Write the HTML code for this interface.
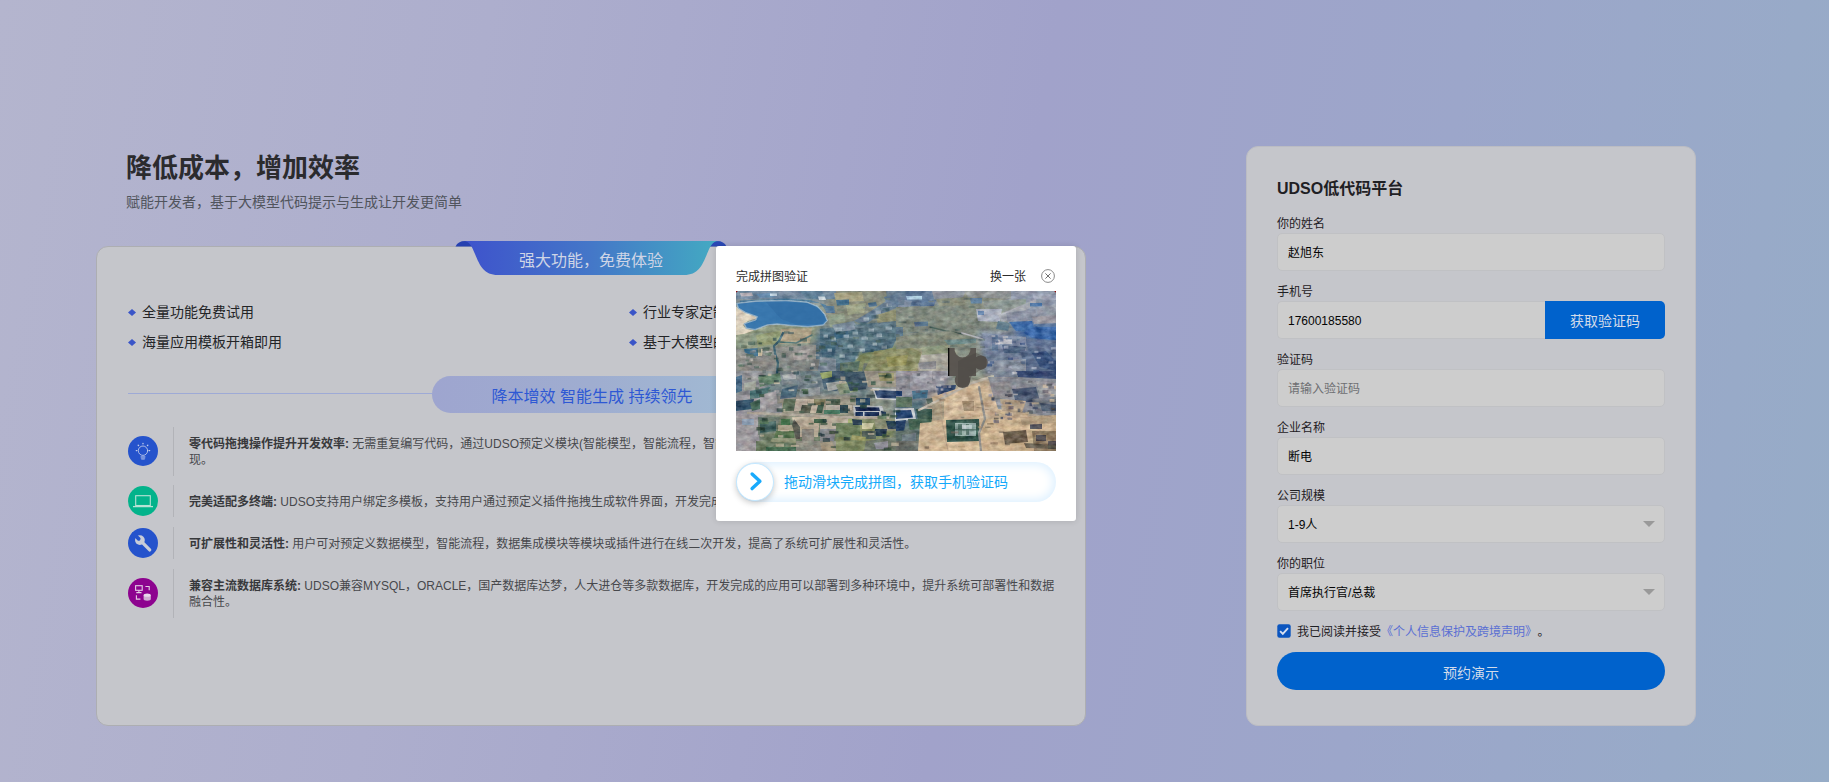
<!DOCTYPE html>
<html lang="zh-CN">
<head>
<meta charset="utf-8">
<title>UDSO低代码平台</title>
<style>
*{box-sizing:border-box;margin:0;padding:0}
html,body{width:1829px;height:782px;overflow:hidden}
body{
  position:relative;
  font-family:"Liberation Sans","Noto Sans CJK SC",sans-serif;
  background:linear-gradient(100deg,#b4b5ce 0%,#adaecd 25%,#a1a2ca 54%,#9ca6ca 75%,#96acc7 100%);
  color:#1d1f22;
}
.abs{position:absolute}
/* ---------- heading ---------- */
.h1{left:126px;top:150px;font-size:26px;line-height:36px;font-weight:700;color:#2b2b2e;white-space:nowrap}
.sub{left:126px;top:192px;font-size:14px;line-height:20px;color:#50545c;white-space:nowrap}
/* ---------- cards ---------- */
.card{background:#c5c6cb;border:1px solid #adaeb2;border-radius:12px}
#lcard{left:96px;top:246px;width:990px;height:480px}
#rcard{left:1246px;top:146px;width:450px;height:580px;border-color:#bbbcc3}
/* ribbon */
#ribbon{left:452px;top:238px;width:280px;height:42px}
.ribtxt{left:456px;top:249px;width:270px;text-align:center;font-size:16px;line-height:24px;color:#cfd5e6;white-space:nowrap}
/* feature bullets */
.bul{font-size:14px;line-height:20px;color:#232427;white-space:nowrap}
.bul i{position:absolute;left:-14px;top:7px;width:8px;height:7px;background:#3a55c8;clip-path:polygon(50% 0,100% 50%,50% 100%,0 50%)}
/* pill */
.pline{left:128px;top:393px;width:305px;height:1px;background:#9eaad6}
.pill{left:432px;top:376px;width:318px;height:37px;border-radius:19px;background:linear-gradient(90deg,#9ea5cf 0%,#9fadd0 50%,#a1bbd3 100%);
  text-align:center;font-size:16px;line-height:37px;padding:2px 0 0 2px;color:#2e58d4;white-space:nowrap}
/* items */
.item{left:128px;width:930px}
.item .ic{position:absolute;left:0;top:50%;margin-top:-15px;width:30px;height:30px;border-radius:50%}
.item .vl{position:absolute;left:45px;top:0;bottom:0;width:1px;background:#b2b3b8}
.item .tx{margin-left:61px;white-space:nowrap;padding:8.6px 0 6.6px;font-size:12px;line-height:16.8px;color:#47484c}
.item .tx b{color:#38393c;font-weight:700}
/* ---------- form ---------- */
.ftitle{left:1277px;top:177px;font-size:16px;line-height:24px;font-weight:700;color:#1f2024;white-space:nowrap}
.lab{left:1277px;font-size:12px;line-height:18px;color:#1f2024;white-space:nowrap}
.inp{left:1277px;width:388px;height:38px;border:1px solid #c0c1c4;border-radius:5px;background:#cdcdcd;
  font-size:12px;line-height:38px;padding-left:10px;color:#050505;white-space:nowrap}
.inp.ph{color:#6e6f72}
.arrow{width:0;height:0;border-left:6px solid transparent;border-right:6px solid transparent;border-top:6px solid #999}
.btn{background:#0062cc;color:#d2dbea;font-size:14px;text-align:center;white-space:nowrap}
/* ---------- modal ---------- */
#modal{left:716px;top:246px;width:360px;height:275px;background:#fff;border-radius:3px;box-shadow:0 0 6px rgba(0,0,0,.14)}
</style>
</head>
<body>

<!-- heading -->
<div class="abs h1">降低成本，增加效率</div>
<div class="abs sub">赋能开发者，基于大模型代码提示与生成让开发更简单</div>

<!-- left card -->
<div class="abs card" id="lcard"></div>

<!-- ribbon -->
<svg class="abs" id="ribbon" viewBox="452 238 280 42">
  <defs>
    <linearGradient id="rg" x1="0" y1="0" x2="1" y2="0">
      <stop offset="0" stop-color="#3e52cc"/>
      <stop offset="0.5" stop-color="#4477c8"/>
      <stop offset="1" stop-color="#43abc2"/>
    </linearGradient>
  </defs>
  <!-- folds -->
  <path d="M455.5 246.5 Q458 241 465 241 L474 241 L474 246.5 Z" fill="#2540b0"/>
  <path d="M726.5 246.5 Q724 241 717 241 L708 241 L708 246.5 Z" fill="#2b49b6"/>
  <!-- body -->
  <path d="M463 241 L719 241 C712 241 710 247 707 254 C702 266 698 275 684 275 L498 275 C484 275 480 266 475 254 C472 247 470 241 463 241 Z" fill="url(#rg)"/>
</svg>
<div class="abs ribtxt">强大功能，免费体验</div>

<!-- bullets -->
<div class="abs bul" style="left:142px;top:302px"><i></i>全量功能免费试用</div>
<div class="abs bul" style="left:142px;top:332px"><i></i>海量应用模板开箱即用</div>
<div class="abs bul" style="left:643px;top:302px"><i></i>行业专家定制化指导</div>
<div class="abs bul" style="left:643px;top:332px"><i></i>基于大模型的智能代码生成</div>

<!-- pill -->
<div class="abs pline"></div>
<div class="abs pill">降本增效 智能生成 持续领先</div>

<!-- items -->
<div class="abs item" style="top:427px">
  <div class="ic" style="background:#2553cc">
    <svg width="30" height="30" viewBox="0 0 30 30" fill="none" stroke="#c3cdec" stroke-width="0.850" stroke-linecap="round">
      <circle cx="15" cy="14.700" r="4.700"/>
      <path d="M15 7.300v.5M10.200 9.200l.4.400M19.800 9.200l-.4.400M8.300 14.600h.6M21.100 14.600h.6" stroke-width="1.300"/>
      <path d="M13 20.800h4M13.200 22h3.600M13.700 23.100h2.600" stroke-width="0.750"/>
    </svg>
  </div>
  <div class="vl"></div>
  <div class="tx"><b>零代码拖拽操作提升开发效率:</b> 无需重复编写代码，通过UDSO预定义模块(智能模型，智能流程，智能报表，数据集成等模块)拖拽配置完成应用开发，快速实<br>现。</div>
</div>
<div class="abs item" style="top:485px">
  <div class="ic" style="background:#03b38b">
    <svg width="30" height="30" viewBox="0 0 30 30" fill="none" stroke="#b8e2d5" stroke-width="1.1">
      <rect x="7.7" y="9.7" width="14.6" height="9.8"/>
      <path d="M5 20.6h20" stroke-width="1.3"/>
    </svg>
  </div>
  <div class="vl"></div>
  <div class="tx"><b>完美适配多终端:</b> UDSO支持用户绑定多模板，支持用户通过预定义插件拖拽生成软件界面，开发完成的应用可同时适配多种终端设备。</div>
</div>
<div class="abs item" style="top:527px">
  <div class="ic" style="background:#2553cc">
    <svg width="30" height="30" viewBox="0 0 30 30">
      <path d="M14 14.200L21.700 21.900" stroke="#c9cdd8" stroke-width="3.300" stroke-linecap="round" fill="none"/>
      <circle cx="11.900" cy="12.100" r="4.900" fill="#c9cdd8"/>
      <path d="M10.700 10.900L5.500 5.700" stroke="#2553cc" stroke-width="3.700" stroke-linecap="round" fill="none"/>
    </svg>
  </div>
  <div class="vl"></div>
  <div class="tx"><b>可扩展性和灵活性:</b> 用户可对预定义数据模型，智能流程，数据集成模块等模块或插件进行在线二次开发，提高了系统可扩展性和灵活性。</div>
</div>
<div class="abs item" style="top:569px">
  <div class="ic" style="background:#8d038f">
    <svg width="30" height="30" viewBox="0 0 30 30" fill="none" stroke="#e3cfe4" stroke-width="1.1">
      <rect x="7.6" y="7.7" width="6.6" height="4.6"/>
      <path d="M10.9 12.3v2.100M8.300 14.6h5.200"/>
      <path d="M17.400 8.500h3.800v3.800"/>
      <path d="M8.400 17.300v3.800h4"/>
      <path d="M15.600 17.200v3.900a3.600 1.700 0 0 0 7.200 0v-3.900z" fill="#cfaed2" stroke="none"/>
      <ellipse cx="19.200" cy="17.200" rx="3.600" ry="1.600" fill="#e9d8eb" stroke="none"/>
    </svg>
  </div>
  <div class="vl"></div>
  <div class="tx"><b>兼容主流数据库系统:</b> UDSO兼容MYSQL，ORACLE，国产数据库达梦，人大进仓等多款数据库，开发完成的应用可以部署到多种环境中，提升系统可部署性和数据<br>融合性。</div>
</div>

<!-- right card -->
<div class="abs card" id="rcard"></div>
<div class="abs ftitle">UDSO低代码平台</div>

<div class="abs lab" style="top:215px">你的姓名</div>
<div class="abs inp" style="top:233px">赵旭东</div>

<div class="abs lab" style="top:283px">手机号</div>
<div class="abs inp" style="top:301px;width:268px;border-radius:5px 0 0 5px;border-right:0">17600185580</div>
<div class="abs btn" style="left:1545px;top:301px;width:120px;height:38px;line-height:40px;border-radius:0 5px 5px 0">获取验证码</div>

<div class="abs lab" style="top:351px">验证码</div>
<div class="abs inp ph" style="top:369px">请输入验证码</div>

<div class="abs lab" style="top:419px">企业名称</div>
<div class="abs inp" style="top:437px">断电</div>

<div class="abs lab" style="top:487px">公司规模</div>
<div class="abs inp" style="top:505px">1-9人</div>
<div class="abs arrow" style="left:1643px;top:521px"></div>

<div class="abs lab" style="top:555px">你的职位</div>
<div class="abs inp" style="top:573px">首席执行官/总裁</div>
<div class="abs arrow" style="left:1643px;top:589px"></div>

<!-- checkbox row -->
<svg class="abs" style="left:1277px;top:624px" width="14" height="14" viewBox="0 0 14 14">
  <rect x="0.300" y="0.300" width="13.400" height="13.400" rx="2.200" fill="#0b55bf"/>
  <path d="M3.100 7.200l2.700 2.700 5.200-5.800" fill="none" stroke="#d6dff0" stroke-width="1.900"/>
</svg>
<div class="abs lab" style="left:1297px;top:623px">我已阅读并接受<span style="color:#5a6fd3">《个人信息保护及跨境声明》</span><span style="letter-spacing:-3px"> </span>。</div>

<div class="abs btn" style="left:1277px;top:652px;width:388px;height:38px;line-height:42px;border-radius:19px">预约演示</div>

<!-- modal -->
<div class="abs" id="modal"></div>
<div class="abs" style="left:736px;top:268px;font-size:12px;line-height:18px;color:#2c2c2c;white-space:nowrap">完成拼图验证</div>
<div class="abs" style="left:990px;top:268px;font-size:12px;line-height:18px;color:#2c2c2c;white-space:nowrap">换一张</div>
<svg class="abs" style="left:1040px;top:268px" width="16" height="16" viewBox="0 0 16 16" fill="none" stroke="#8a8a8a" stroke-width="1">
  <circle cx="8" cy="8" r="6.400"/>
  <path d="M5.400 5.400l5.200 5.200M10.600 5.400l-5.200 5.200" stroke="#6f6f6f"/>
</svg>

<!-- captcha photo -->
<svg class="abs" id="photo" style="left:736px;top:291px" width="320" height="160" viewBox="0 0 320 160">
  <defs><filter id="b3" x="-10%" y="-10%" width="120%" height="120%"><feGaussianBlur stdDeviation="3"/></filter><filter id="b1" x="-10%" y="-10%" width="120%" height="120%"><feGaussianBlur stdDeviation="0.7"/></filter><filter id="b0" x="-10%" y="-10%" width="120%" height="120%"><feGaussianBlur stdDeviation="0.55"/></filter><filter id="nz" x="0" y="0" width="100%" height="100%"><feTurbulence type="fractalNoise" baseFrequency="0.19 0.26" numOctaves="3" seed="7"/><feColorMatrix type="matrix" values="0 0 0 0 0.5  0 0 0 0 0.5  0 0 0 0 0.5  1.6 1.6 0 0 -1.1"/></filter><filter id="nd" x="0" y="0" width="100%" height="100%"><feTurbulence type="fractalNoise" baseFrequency="0.16 0.22" numOctaves="3" seed="23"/><feColorMatrix type="matrix" values="0 0 0 0 0.08  0 0 0 0 0.14  0 0 0 0 0.2  1.7 0 1.7 0 -1.25"/></filter><filter id="nl" x="0" y="0" width="100%" height="100%"><feTurbulence type="fractalNoise" baseFrequency="0.2 0.3" numOctaves="3" seed="51"/><feColorMatrix type="matrix" values="0 0 0 0 0.86  0 0 0 0 0.85  0 0 0 0 0.84  0 1.8 1.8 0 -1.4"/></filter><filter id="tex" x="0" y="0" width="100%" height="100%" color-interpolation-filters="sRGB"><feTurbulence type="fractalNoise" baseFrequency="0.13 0.2" numOctaves="3" seed="11" result="n"/><feColorMatrix in="n" type="matrix" values="0.5 0.4 0.1 0 0  0.4 0.5 0.1 0 0  0.35 0.45 0.2 0 0  0 0 0 0 1" result="n2"/><feComposite in="SourceGraphic" in2="n2" operator="arithmetic" k1="0" k2="1" k3="0.5" k4="-0.25"/></filter><linearGradient id="hz" x1="0" y1="0" x2="0" y2="1"><stop offset="0" stop-color="#b4bcc8" stop-opacity="0.07"/><stop offset="0.55" stop-color="#b4bcc8" stop-opacity="0"/></linearGradient><clipPath id="pc"><rect width="320" height="160"/></clipPath></defs>
  <g clip-path="url(#pc)">
  <g filter="url(#tex)">
  <rect x="0" y="0" width="320" height="160" fill="#8a9286"/>
  <g filter="url(#b3)">
  <rect x="-10" y="-10" width="340" height="180" fill="#8a9286"/>
  <rect x="-10" y="-10" width="110" height="20" fill="#6f879a"/>
  <polygon points="90,-5 165,-5 165,45 95,40" fill="#868a7a"/>
  <polygon points="-5,34 90,34 90,58 -5,58" fill="#8f9a7e"/>
  <polygon points="-5,56 85,52 85,84 -5,84" fill="#848884"/>
  <polygon points="82,36 165,30 165,60 125,62 115,84 70,84 78,50" fill="#546e7e"/>
  <polygon points="122,62 165,50 165,84 112,84" fill="#7d8860"/>
  <polygon points="158,-5 205,-5 200,16 158,18" fill="#64798f"/>
  <polygon points="158,16 250,10 250,58 158,60" fill="#7f877c"/>
  <polygon points="200,-5 275,-5 275,18 205,16" fill="#888c7c"/>
  <polygon points="270,-5 325,-5 325,32 270,28" fill="#8b93a4"/>
  <polygon points="242,40 325,44 325,84 250,84" fill="#74829a"/>
  <polygon points="272,30 325,33 325,50 285,48" fill="#3c689e"/>
  <polygon points="158,58 215,56 212,84 158,84" fill="#9c9a78"/>
  <polygon points="-5,82 30,82 28,165 -5,165" fill="#97949a"/>
  <polygon points="28,80 135,80 135,108 28,112" fill="#6f8084"/>
  <polygon points="40,106 120,104 120,124 40,124" fill="#978f80"/>
  <polygon points="22,126 120,126 120,165 22,165" fill="#6e7c66"/>
  <polygon points="100,128 165,126 165,165 100,165" fill="#828a60"/>
  <polygon points="158,80 218,80 205,104 158,112" fill="#93929b"/>
  <polygon points="158,110 200,104 200,140 158,140" fill="#56707a"/>
  <polygon points="158,136 190,134 186,165 158,165" fill="#5f6f6a"/>
  <polygon points="196,104 260,86 325,100 325,165 182,165 186,132" fill="#c6ae90"/>
  <polygon points="252,82 325,78 325,128 262,118" fill="#84878f"/>
  </g>
  <g filter="url(#b1)">
  <rect x="0" y="0" width="100" height="8" fill="#6a8298"/>
  <polygon points="4,2 16,1.5 17,5 5,5.5" fill="#c9b9bd" opacity="0.8"/>
  <polygon points="20,3 34,2 40,6 24,7" fill="#5d84a6"/>
  <polygon points="34,2.5 41,2.5 41,5 34,5" fill="#c3d2de" opacity="0.9"/>
  <polygon points="42,0 62,0 64,4 44,5" fill="#73859a"/>
  <polygon points="64,0 86,0 90,8 70,7" fill="#5f7f96"/>
  <polygon points="82,5.5 89,5.5 90,9 83,9" fill="#dfe6ea" opacity="0.9"/>
  <polygon points="4,9.5 50,7.5 74,9 90,14 92,22 84,12 50,10 4,12" fill="#4a7898"/>
  <polygon points="0,16 8,18 20,23 22,27 12,30 7,34 10,38 18,39.5 8,43 0,45" fill="#d8cdb8"/>
  <polygon points="1,12.5 20,10.4 50,9.8 71,11.4 81,15.5 88.5,23.5 91,29.5 87,33.8 72,35.4 55,34.2 41,32.8 31,33.8 19,38.4 10.5,37 8.5,32.8 20,29 21.5,25.6 10,21.5 2.5,17" fill="#9ab6cb" stroke="#9ab6cb" stroke-width="1.6" stroke-linejoin="round"/>
  <polygon points="1,12.5 20,10.4 50,9.8 71,11.4 81,15.5 88.5,23.5 91,29.5 87,33.8 72,35.4 55,34.2 41,32.8 31,33.8 19,38.4 10.5,37 8.5,32.8 20,29 21.5,25.6 10,21.5 2.5,17" fill="#3070ab"/>
  <polygon points="40,14 86,20 90,29 86,33 60,33 40,30" fill="#2b68a4" opacity="0.7"/>
  <polygon points="9,33 30,30 30,33.5 19,38 11,36.6" fill="#3a78ac" opacity="0.8"/>
  <polygon points="98,2 126,1 128,10 100,11" fill="#a5a07e"/>
  <polygon points="100,9 113,8.5 113,14 101,14.5" fill="#3f6c8a"/>
  <polygon points="88,15 98,15 99,22 90,22" fill="#5b7f9c"/>
  <polygon points="92,24 108,22 110,34 94,36" fill="#8e9a84"/>
  <polygon points="118,30 135,20 150,10 162,6 162,16 148,22 128,34" fill="#64798c"/>
  <polygon points="132,12 140,11 141,15 133,16" fill="#4f6f8c"/>
  <polygon points="148,6 160,3 160,9 150,11" fill="#5b7390"/>
  <polygon points="110,14 130,12 128,22 112,24" fill="#9a9f82"/>
  <polygon points="140,24 162,18 162,30 142,34" fill="#8f9070"/>
  <polygon points="45,38 76,37 74,52 44,53" fill="#ad9f84"/>
  <polygon points="0,44 30,40 42,44 38,56 0,58" fill="#8f9a84"/>
  <polygon points="20,44 44,40 44,52 22,56" fill="#929c74"/>
  <path d="M47 42 L43 50 L38 55 L39 62 L42 72 L41 82" fill="none" stroke="#3d606e" stroke-width="2.2" stroke-linejoin="round" stroke-linecap="round"/>
  <path d="M43 51 L60 52 L76 44" fill="none" stroke="#4f7070" stroke-width="1.6" stroke-linejoin="round" stroke-linecap="round"/>
  <polygon points="8,58 22,57 22,65 10,67" fill="#41708e"/>
  <polygon points="22,58 27,58 26,65 22,65" fill="#cbbfa6"/>
  <polygon points="0,58 20,66 40,64 40,80 0,80" fill="#8a8a86"/>
  <polygon points="44,56 80,54 80,70 46,72" fill="#8c8c88"/>
  <polygon points="56,60 74,58 72,68 58,69" fill="#a39e9c"/>
  <polygon points="44,70 84,68 82,80 44,80" fill="#7e8280"/>
  <polygon points="84,38 110,36 125,40 120,52 96,56 84,50" fill="#4c6a7a"/>
  <polygon points="96,34 118,30 122,38 100,42" fill="#7d8e9c"/>
  <polygon points="98,42 112,40 114,50 100,52" fill="#3c647e"/>
  <polygon points="84,52 100,54 98,66 86,66" fill="#426476"/>
  <polygon points="100,48 130,42 160,40 160,50 128,56 104,60" fill="#5c7884"/>
  <polygon points="118,34 160,30 160,40 122,44" fill="#5c7682"/>
  <polygon points="130,50 160,48 156,58 126,62" fill="#4e6a7a"/>
  <polygon points="100,60 124,58 118,72 98,72" fill="#5a7682"/>
  <polygon points="84,66 100,68 100,80 82,80" fill="#7c8894"/>
  <rect x="99.5" y="36.5" width="6.5" height="3.7" fill="#aebcc2" opacity="0.65"/>
  <rect x="107.5" y="43.5" width="5.5" height="3.2" fill="#aebcc2" opacity="0.65"/>
  <rect x="95.5" y="46.5" width="4.5" height="3.2" fill="#aebcc2" opacity="0.65"/>
  <rect x="116.5" y="40.5" width="5.5" height="3.2" fill="#aebcc2" opacity="0.65"/>
  <rect x="125.5" y="45.5" width="6.5" height="3.2" fill="#aebcc2" opacity="0.65"/>
  <rect x="132.5" y="37.5" width="5.5" height="3.2" fill="#aebcc2" opacity="0.65"/>
  <rect x="140.5" y="42.5" width="5.5" height="3.7" fill="#aebcc2" opacity="0.65"/>
  <rect x="149.5" y="35.5" width="6.5" height="3.2" fill="#aebcc2" opacity="0.65"/>
  <rect x="111.5" y="53.5" width="5.5" height="3.2" fill="#aebcc2" opacity="0.65"/>
  <rect x="123.5" y="57.5" width="5.5" height="3.2" fill="#aebcc2" opacity="0.65"/>
  <rect x="136.5" y="51.5" width="4.5" height="3.2" fill="#aebcc2" opacity="0.65"/>
  <rect x="145.5" y="54.5" width="5.5" height="3.2" fill="#aebcc2" opacity="0.65"/>
  <rect x="103.5" y="63.5" width="5.5" height="3.2" fill="#aebcc2" opacity="0.65"/>
  <rect x="91.5" y="57.5" width="4.5" height="3.2" fill="#aebcc2" opacity="0.65"/>
  <rect x="127.5" y="26.5" width="5.5" height="3.2" fill="#aebcc2" opacity="0.65"/>
  <rect x="139.5" y="19.5" width="5.5" height="3.2" fill="#aebcc2" opacity="0.65"/>
  <rect x="150.5" y="12.5" width="5.5" height="3.2" fill="#aebcc2" opacity="0.65"/>
  <rect x="87.5" y="43.5" width="4.5" height="3.2" fill="#aebcc2" opacity="0.65"/>
  <rect x="119.5" y="65.5" width="4.5" height="3.2" fill="#aebcc2" opacity="0.65"/>
  <rect x="102.5" y="40" width="7" height="3.5" fill="#33545e" opacity="0.6"/>
  <rect x="112.5" y="47" width="7" height="3.5" fill="#33545e" opacity="0.6"/>
  <rect x="121.5" y="37" width="6" height="3.5" fill="#33545e" opacity="0.6"/>
  <rect x="130.5" y="43" width="7" height="3.5" fill="#33545e" opacity="0.6"/>
  <rect x="142.5" y="48" width="7" height="3.5" fill="#33545e" opacity="0.6"/>
  <rect x="151.5" y="42" width="7" height="3.5" fill="#33545e" opacity="0.6"/>
  <rect x="106.5" y="58" width="7" height="3.5" fill="#33545e" opacity="0.6"/>
  <rect x="116.5" y="61" width="6" height="3.5" fill="#33545e" opacity="0.6"/>
  <rect x="134.5" y="58" width="7" height="3.5" fill="#33545e" opacity="0.6"/>
  <rect x="89.5" y="50" width="6" height="3.5" fill="#33545e" opacity="0.6"/>
  <rect x="135.5" y="24" width="7" height="3.5" fill="#33545e" opacity="0.6"/>
  <rect x="146.5" y="17" width="7" height="3.5" fill="#33545e" opacity="0.6"/>
  <rect x="124.5" y="31" width="6" height="3.5" fill="#33545e" opacity="0.6"/>
  <polygon points="124,64 160,56 160,80 112,80" fill="#7d8860"/>
  <polygon points="140,66 160,62 160,72 142,74" fill="#8c8c5e"/>
  <polygon points="104,72 124,70 122,80 104,80" fill="#5a6e62"/>
  <polygon points="128,72 146,74 144,80 126,80" fill="#6c746c"/>
  <polygon points="160,0 200,0 196,14 160,16" fill="#5f7896"/>
  <polygon points="170,5 186,5 186,8.5 171,8.5" fill="#a6c6da"/>
  <polygon points="162,8 176,10 174,16 162,16" fill="#8290a6"/>
  <polygon points="182,10 200,9 198,15 184,16" fill="#50698a"/>
  <polygon points="196,0 230,0 226,8 198,8" fill="#8a8f98"/>
  <polygon points="200,8 232,6 230,16 204,16" fill="#888c78"/>
  <polygon points="234,7 246,7 246,12.5 235,12.5" fill="#5b7b9a"/>
  <polygon points="228,0 275,0 275,8 232,6" fill="#8c9090"/>
  <polygon points="246,10 290,8 290,20 250,20" fill="#8c9690"/>
  <polygon points="160,16 244,14 244,34 160,36" fill="#80887c"/>
  <polygon points="178,31 192,30.5 192,35 179,35.5" fill="#56708a"/>
  <polygon points="160,36 167,36 167,45 160,46" fill="#5c7488"/>
  <path d="M194 36 L210 40 L226 43" fill="none" stroke="#4b6158" stroke-width="1.4" stroke-linejoin="round" stroke-linecap="round"/>
  <polygon points="172,44 198,45 196,49 174,49" fill="#63806e"/>
  <polygon points="160,46 215,40 230,46 228,56 160,58" fill="#828878"/>
  <polygon points="208,49 240,47.5 240,52 212,54" fill="#6a8484"/>
  <polygon points="240,18 266,18 264,31 242,30" fill="#a9aebc"/>
  <polygon points="242,20 248,20 248,24 242,24" fill="#6480a8"/>
  <path d="M226 42 L240 46 L252 50" fill="none" stroke="#b4b8ba" stroke-width="1.8" stroke-linejoin="round" stroke-linecap="round"/>
  <polygon points="262,24 286,14 300,8 300,14 288,20 266,32" fill="#a2a6ae"/>
  <polygon points="296,2 320,4 320,9 298,8" fill="#9ca2b4"/>
  <polygon points="294,12 306,12 306,15.5 294,15.5" fill="#5078a8"/>
  <polygon points="300,16 320,14 320,24 302,26" fill="#8d93a0"/>
  <polygon points="270,22 300,18 300,30 272,32" fill="#8a90a0"/>
  <polygon points="296,26 320,24 320,32 298,33" fill="#9a98a0"/>
  <polygon points="273,31 296,30 298,38 280,40" fill="#3a68a6"/>
  <polygon points="290,36 320,36 320,49 296,47 288,42" fill="#3462a2"/>
  <polygon points="262,30 274,32 272,40 260,38" fill="#5f7a8a"/>
  <polygon points="246,42 290,46 290,60 250,60" fill="#808ca4"/>
  <polygon points="256,48 276,48 276,53 257,53" fill="#c3c0c4" opacity="0.8"/>
  <polygon points="290,48 320,50 320,60 292,60" fill="#5c6e8e"/>
  <polygon points="250,58 286,58 286,70 252,72" fill="#6c7a92"/>
  <polygon points="266,54 290,56 288,62 268,62" fill="#4c5e7c"/>
  <polygon points="284,60 320,58 320,80 290,80" fill="#586a88"/>
  <polygon points="296,62 310,60 320,70 320,80 304,76" fill="#385078"/>
  <polygon points="252,70 290,68 290,80 254,80" fill="#868e9c"/>
  <polygon points="256,44 262,44 262,60 256,60" fill="#5b7496" opacity="0.7"/>
  <polygon points="160,60 186,58 184,80 160,80" fill="#96967a"/>
  <polygon points="164,70 182,72 180,80 162,80" fill="#9e9a70"/>
  <polygon points="184,62 214,60 212,80 182,80" fill="#a9a69c"/>
  <polygon points="186,56 212,54 212,62 186,64" fill="#8a9378"/>
  <polygon points="182,72 200,70 200,78 184,78" fill="#8a8a8e"/>
  <polygon points="138,60 176,57 186,62 180,79 128,80" fill="#8a8c64" opacity="0.85"/>
  <polygon points="150,66 172,64 170,74 152,76" fill="#9a965a" opacity="0.7"/>
  <polygon points="150,0 170,0 168,14 152,15" fill="#62788e" opacity="0.8"/>
  <polygon points="0,80 26,80 24,104 0,104" fill="#8f9094"/>
  <polygon points="0,86 6,84 6,100 0,102" fill="#4a6a86"/>
  <polygon points="8,92 20,90 20,98 8,100" fill="#a0a49a"/>
  <polygon points="22,86 44,82 46,90 24,96" fill="#64806a"/>
  <polygon points="14,100 34,96 30,106 14,108" fill="#4e7272"/>
  <polygon points="0,110 18,108 16,118 0,120" fill="#314f66"/>
  <polygon points="14,112 24,108 24,118 16,120" fill="#4b6a5c"/>
  <polygon points="24,104 40,100 42,118 26,120" fill="#a29ea0"/>
  <polygon points="44,82 64,80 66,92 46,94" fill="#7f8a90"/>
  <polygon points="46,84 60,82 60,88 48,89" fill="#b0b0b2" opacity="0.8"/>
  <polygon points="60,92 90,86 92,98 64,104" fill="#6e7c84"/>
  <polygon points="46,98 62,94 60,106 44,108" fill="#4a6474"/>
  <polygon points="62,98 84,96 84,104 64,106" fill="#8f9698"/>
  <polygon points="84,80 116,80 126,86 100,100 88,98" fill="#41596a"/>
  <polygon points="90,92 106,90 104,98 92,100" fill="#c4c0b6" opacity="0.75"/>
  <polygon points="84,82 96,80 96,86 86,88" fill="#8c9a62"/>
  <polygon points="100,94 120,88 122,100 104,104" fill="#8a957c"/>
  <polygon points="108,82 134,80 130,98 114,100" fill="#3f5666"/>
  <polygon points="128,80 160,80 160,96 132,96" fill="#9a9486"/>
  <polygon points="142,82 158,82 158,90 144,90" fill="#939068"/>
  <polygon points="48,108 60,108 58,120 46,120" fill="#5d6e5a"/>
  <polygon points="60,108 72,108 70,120 58,120" fill="#b9ac9e"/>
  <polygon points="66,114 76,114 74,122 64,122" fill="#565a4e"/>
  <polygon points="72,108 82,108 80,114 72,114" fill="#c2b4a0"/>
  <polygon points="78,108 90,108 88,114 78,114" fill="#7d7a5e"/>
  <polygon points="76,114 84,114 82,122 74,122" fill="#bcae9c"/>
  <polygon points="82,114 88,114 86,122 80,122" fill="#3f5a4a"/>
  <polygon points="90,108 104,108 104,114 90,114" fill="#5a6a5c"/>
  <polygon points="90,114 116,114 116,119 90,119" fill="#b4ab9e"/>
  <polygon points="88,119 104,119 104,123 88,123" fill="#4e7a64"/>
  <polygon points="104,114 112,114 112,122 104,122" fill="#2f4650"/>
  <polygon points="30,114 46,112 46,122 30,122" fill="#8e8e92"/>
  <polygon points="136,97 160,98 160,109 140,108" fill="#b8bcc0"/>
  <polygon points="138.5,99 160,100 160,107.5 141,106.8" fill="#33476a"/>
  <polygon points="120,107 134,107 134,114 120,114" fill="#2b4a64"/>
  <polygon points="117,114.5 146,115 150,126 118,125.5" fill="#b0b4b8"/>
  <polygon points="119,116 143,116.5 144,120 120,120" fill="#1b2c50"/>
  <polygon points="119.5,121 127,121 127,125 119.5,125" fill="#1d3058"/>
  <polygon points="128.5,121 143,121 143,125 128.5,125" fill="#1c2e54"/>
  <polygon points="145,120 150,121 150,125 146,125" fill="#263c58"/>
  <path d="M12 122 L50 123.5 L100 126 L152 127" fill="none" stroke="#aba396" stroke-width="2.4" stroke-linejoin="round" stroke-linecap="round"/>
  <polygon points="0,122 22,124 24,160 0,160" fill="#9c989c"/>
  <polygon points="6,128 18,128 18,134 6,134" fill="#8fa6c0" opacity="0.7"/>
  <polygon points="22,126 44,126 40,142 22,144" fill="#6e7c70"/>
  <polygon points="24,132 40,130 40,140 24,142" fill="#3f5f5c"/>
  <polygon points="45,128 54,128 54,134 45,134" fill="#4c7450"/>
  <polygon points="42,134 58,134 58,140 42,140" fill="#a8a088"/>
  <polygon points="40,140 58,140 58,147 38,147" fill="#54704e"/>
  <polygon points="36,147 60,147 60,152 34,152" fill="#8f9478"/>
  <polygon points="56,126 84,126 82,146 60,146" fill="#b2a592"/>
  <polygon points="58,128 64,136 64,148 60,148 56,134" fill="#5a5a52"/>
  <polygon points="66,138 78,138 78,150 66,150" fill="#8c8880"/>
  <polygon points="84,126 116,128 116,138 84,138" fill="#b3a998"/>
  <polygon points="78,128 90,128 90,132 78,132" fill="#3f5f4a"/>
  <polygon points="84,138 100,138 98,150 84,150" fill="#85868a"/>
  <polygon points="100,132 124,132 124,146 100,146" fill="#6f8260"/>
  <polygon points="112,128 122,128 122,132 112,132" fill="#9aa86a"/>
  <polygon points="116,128 126,129 126,134 117,134" fill="#2c3e50"/>
  <polygon points="126,132 138,132 136,138 126,138" fill="#d0c8a8" opacity="0.8"/>
  <polygon points="138,128 160,128 160,140 140,140" fill="#8a8e74"/>
  <polygon points="139,138 151,138 150,145 138,145" fill="#2b3d50"/>
  <polygon points="126,140 140,140 140,148 126,148" fill="#54645c"/>
  <polygon points="116,144 130,146 128,154 114,154" fill="#8e8e5a"/>
  <polygon points="150,130 160,130 160,138 152,138" fill="#33485c"/>
  <polygon points="20,150 60,152 60,160 20,160" fill="#6a7a62"/>
  <polygon points="30,156 64,156 64,160 30,160" fill="#4c7056"/>
  <polygon points="60,150 100,150 100,160 60,160" fill="#8c8a80"/>
  <polygon points="84,152 96,150 100,160 86,160" fill="#a0947e"/>
  <polygon points="100,148 132,150 130,160 100,160" fill="#7c8660"/>
  <polygon points="130,150 160,146 160,160 128,160" fill="#6c7468"/>
  <polygon points="138,152 152,150 152,158 140,158" fill="#8e8e96"/>
  <polygon points="160,80 214,80 206,100 160,104" fill="#94939c"/>
  <polygon points="176,82 196,80 196,90 178,92" fill="#a4a3ac"/>
  <polygon points="160,86 174,84 174,98 160,100" fill="#8a8a90"/>
  <polygon points="160,100 166,100 166,105 160,105" fill="#28426e"/>
  <polygon points="176,100 192,99 191,107 177,108" fill="#4a7088"/>
  <polygon points="200,95 220,94 218,104 202,105" fill="#33466a"/>
  <polygon points="190,108 204,106 204,112 192,114" fill="#4f5f58"/>
  <polygon points="160,106 176,106 176,116 160,116" fill="#5f7464"/>
  <polygon points="159,117.5 178,117 180,128.5 159,130.5" fill="#c4c8cc"/>
  <polygon points="160,119.5 175,119 177,126.5 160,128" fill="#2b4672"/>
  <polygon points="180,118 200,118 198,128 182,129" fill="#3c5a50"/>
  <polygon points="160,130 170,129 168,140 160,140" fill="#2b4468"/>
  <polygon points="172,128 196,128 194,138 174,140" fill="#4a6654"/>
  <polygon points="160,140 186,138 184,152 160,152" fill="#5c6c68"/>
  <polygon points="166,144 180,142 180,150 166,150" fill="#6e7a80"/>
  <polygon points="160,150 184,150 182,160 160,160" fill="#6a6e68"/>
  <polygon points="196,106 244,90 246,128 200,132" fill="#c8b092"/>
  <polygon points="212,108 232,106 234,122 214,124" fill="#d0b99c"/>
  <polygon points="226,110 238,110 238,120 228,120" fill="#8a7860" opacity="0.7"/>
  <polygon points="184,132 210,130 210,160 182,160" fill="#c8b192"/>
  <polygon points="196,150 250,150 250,160 194,160" fill="#cfb796"/>
  <polygon points="248,100 290,104 292,132 250,130" fill="#c2ab90"/>
  <polygon points="250,128 320,126 320,160 246,160" fill="#c8af8e"/>
  <polygon points="258,110 286,108 288,120 260,122" fill="#ccb598"/>
  <polygon points="244,130 266,130 266,160 246,160" fill="#cab190"/>
  <polygon points="196,112 208,110 208,128 196,130" fill="#a89c84"/>
  <polygon points="210,129 243,128 244,150 211,151" fill="#30524a"/>
  <polygon points="219,132 240,132 240,145 219,145" fill="#8fa6a2"/>
  <rect x="222" y="133" width="4" height="11" fill="#4f6e64" opacity="0.8"/>
  <rect x="230" y="133" width="3" height="11" fill="#4f6e64" opacity="0.8"/>
  <rect x="219" y="138" width="21" height="1.6" fill="#4f6e64" opacity="0.7"/>
  <polygon points="226,134 236,134 236,138 226,138" fill="#c4d0d0" opacity="0.8"/>
  <path d="M183 119 L200 110.5 L236 92 L256 85.5 L290 84.5 L320 86" fill="none" stroke="#b8b0a2" stroke-width="2.4" stroke-linejoin="round" stroke-linecap="round"/>
  <path d="M243 96 L246 112 L249 128 L243 142 L245 160" fill="none" stroke="#8c8a86" stroke-width="2.2" stroke-linejoin="round" stroke-linecap="round"/>
  <path d="M204 108 L206 130 L212 160" fill="none" stroke="#b09c84" stroke-width="1.2" opacity="0.8" stroke-linejoin="round" stroke-linecap="round"/>
  <polygon points="252,86 320,88 320,126 262,118" fill="#878a92"/>
  <polygon points="258,80 280,80 282,86 258,86" fill="#7c8594"/>
  <polygon points="280,80 320,80 320,88 282,86" fill="#384a70"/>
  <polygon points="276,98 300,96 304,110 280,112" fill="#4c5870"/>
  <polygon points="300,90 320,92 320,104 304,104" fill="#9a9a9e"/>
  <polygon points="254,92 274,90 276,106 258,108" fill="#8c8a8e"/>
  <polygon points="296,108 320,106 320,122 300,122" fill="#70747e"/>
  <polygon points="264,108 290,110 286,122 266,120" fill="#b09c84"/>
  <polygon points="304,112 320,114 320,120 306,120" fill="#4c586c"/>
  <rect x="291.6" y="119.2" width="5.3" height="3.4" fill="#54565e" opacity="0.75"/>
  <rect x="306.8" y="120.6" width="3.4" height="1.6" fill="#9c9aa8" opacity="0.75"/>
  <rect x="255.9" y="107.7" width="3.4" height="2.6" fill="#b0a8a8" opacity="0.75"/>
  <rect x="248.9" y="97.1" width="3.5" height="3.3" fill="#c8b398" opacity="0.75"/>
  <rect x="259.2" y="121.5" width="3" height="2.7" fill="#9c9aa8" opacity="0.75"/>
  <rect x="257.3" y="128.8" width="2.5" height="3" fill="#9c9aa8" opacity="0.75"/>
  <rect x="309.1" y="100.2" width="5.9" height="2.6" fill="#b0a8a8" opacity="0.75"/>
  <rect x="260.7" y="128.7" width="3.2" height="3.4" fill="#c8b398" opacity="0.75"/>
  <rect x="268.9" y="103.2" width="3.1" height="1.8" fill="#4a4e5a" opacity="0.75"/>
  <rect x="271.2" y="122.3" width="4.6" height="2.7" fill="#6a6670" opacity="0.75"/>
  <rect x="252.6" y="102.9" width="3.6" height="2.9" fill="#9c9aa8" opacity="0.75"/>
  <rect x="281.7" y="117.6" width="2.7" height="3.5" fill="#54565e" opacity="0.75"/>
  <rect x="314.4" y="103" width="3.9" height="2.6" fill="#c8b398" opacity="0.75"/>
  <rect x="273.6" y="112.3" width="2.5" height="1.6" fill="#9c9aa8" opacity="0.75"/>
  <rect x="291.7" y="128.1" width="2.9" height="2" fill="#5a5048" opacity="0.75"/>
  <rect x="272.1" y="102.9" width="4.3" height="3.1" fill="#4a4e5a" opacity="0.75"/>
  <rect x="289.3" y="120.8" width="3.8" height="2.1" fill="#c8b398" opacity="0.75"/>
  <rect x="314.2" y="91.8" width="3.7" height="2.7" fill="#9c9aa8" opacity="0.75"/>
  <rect x="271.8" y="126.8" width="4.4" height="2.1" fill="#6a6670" opacity="0.75"/>
  <rect x="269.4" y="121.5" width="4.7" height="2.9" fill="#3c4860" opacity="0.75"/>
  <rect x="317.8" y="94.8" width="2.7" height="3.5" fill="#c8b398" opacity="0.75"/>
  <rect x="250.2" y="119.1" width="3.7" height="2" fill="#c8b398" opacity="0.75"/>
  <rect x="258.2" y="129.1" width="4.7" height="3.1" fill="#6a6670" opacity="0.75"/>
  <rect x="306.7" y="93.5" width="5.1" height="3.4" fill="#c8b398" opacity="0.75"/>
  <rect x="255.5" y="106.3" width="3" height="3.2" fill="#3c4860" opacity="0.75"/>
  <rect x="257.9" y="126.7" width="4.7" height="1.8" fill="#5a5048" opacity="0.75"/>
  <rect x="315.2" y="116.9" width="3.6" height="2" fill="#5a5048" opacity="0.75"/>
  <rect x="276.3" y="94.2" width="3.8" height="3.5" fill="#9c9aa8" opacity="0.75"/>
  <rect x="291.9" y="109" width="3.7" height="1.7" fill="#3c4860" opacity="0.75"/>
  <rect x="284.1" y="111" width="4.3" height="1.6" fill="#6a6670" opacity="0.75"/>
  <rect x="296.6" y="115.9" width="5.2" height="2.2" fill="#3c4860" opacity="0.75"/>
  <rect x="306.5" y="99.1" width="5.9" height="2.9" fill="#6a6670" opacity="0.75"/>
  <rect x="293.5" y="112.4" width="2.5" height="2.6" fill="#3c4860" opacity="0.75"/>
  <rect x="270.8" y="99.5" width="3.5" height="2.5" fill="#6a6670" opacity="0.75"/>
  <rect x="272.4" y="115.1" width="5.1" height="3.2" fill="#6a6670" opacity="0.75"/>
  <rect x="312.6" y="95.2" width="5.5" height="2.4" fill="#6a6670" opacity="0.75"/>
  <rect x="315" y="109.8" width="4.4" height="1.8" fill="#6a6670" opacity="0.75"/>
  <rect x="313.6" y="108" width="4.9" height="2.9" fill="#c8b398" opacity="0.75"/>
  <rect x="260" y="120.8" width="4.5" height="2.8" fill="#c8b398" opacity="0.75"/>
  <rect x="269.2" y="111.2" width="5.5" height="2" fill="#54565e" opacity="0.75"/>
  <rect x="261.7" y="112.6" width="4.7" height="1.9" fill="#9c9aa8" opacity="0.75"/>
  <rect x="292.2" y="89.8" width="4.2" height="2" fill="#54565e" opacity="0.75"/>
  <rect x="310.4" y="92.7" width="5.9" height="2.5" fill="#54565e" opacity="0.75"/>
  <rect x="277.1" y="102.7" width="4.8" height="1.6" fill="#b0a8a8" opacity="0.75"/>
  <rect x="264.6" y="125.9" width="2.5" height="2.3" fill="#3c4860" opacity="0.75"/>
  <rect x="307.9" y="124.4" width="4.9" height="2.6" fill="#54565e" opacity="0.75"/>
  <rect x="258.6" y="123.1" width="4.5" height="1.8" fill="#7c7468" opacity="0.6"/>
  <rect x="224.7" y="125.6" width="3.6" height="1.6" fill="#7c7468" opacity="0.6"/>
  <rect x="270.8" y="126.5" width="3.7" height="1.9" fill="#7c7468" opacity="0.6"/>
  <rect x="249" y="118" width="3.7" height="1.1" fill="#8a7860" opacity="0.6"/>
  <rect x="236.4" y="124.3" width="7.6" height="1.8" fill="#a89070" opacity="0.6"/>
  <rect x="269.1" y="152.6" width="4.9" height="1.6" fill="#6e6254" opacity="0.6"/>
  <rect x="251.1" y="132" width="6.5" height="1.6" fill="#6e6254" opacity="0.6"/>
  <rect x="264.6" y="121" width="7.9" height="1.7" fill="#dcc49c" opacity="0.6"/>
  <rect x="188.6" y="155.3" width="4.5" height="2.4" fill="#6e6254" opacity="0.6"/>
  <rect x="249" y="114.1" width="6.1" height="1.7" fill="#a89070" opacity="0.6"/>
  <rect x="191.3" y="114.8" width="5" height="1.7" fill="#7c7468" opacity="0.6"/>
  <rect x="222.1" y="154.8" width="6.9" height="1.4" fill="#a89070" opacity="0.6"/>
  <rect x="297.4" y="144.1" width="4.4" height="1.7" fill="#dcc49c" opacity="0.6"/>
  <rect x="254.4" y="151.2" width="7.4" height="2.3" fill="#8a7860" opacity="0.6"/>
  <rect x="286.4" y="123" width="5.7" height="1.5" fill="#a89070" opacity="0.6"/>
  <rect x="282.5" y="109.3" width="4.7" height="2" fill="#7c7468" opacity="0.6"/>
  <rect x="203.5" y="108.1" width="5.8" height="2" fill="#8a7860" opacity="0.6"/>
  <rect x="303.2" y="135.3" width="3.1" height="2.2" fill="#dcc49c" opacity="0.6"/>
  <rect x="264.5" y="142.5" width="7.8" height="2" fill="#dcc49c" opacity="0.6"/>
  <rect x="248.8" y="142.1" width="6.6" height="2.3" fill="#dcc49c" opacity="0.6"/>
  <rect x="295.6" y="111.3" width="7.2" height="2" fill="#dcc49c" opacity="0.6"/>
  <rect x="262.8" y="140.4" width="5.4" height="1.5" fill="#6e6254" opacity="0.6"/>
  <rect x="249.2" y="135.5" width="5.5" height="1.5" fill="#6e6254" opacity="0.6"/>
  <rect x="242.2" y="135.1" width="3.2" height="2.1" fill="#a89070" opacity="0.6"/>
  <rect x="294.2" y="147.6" width="6.3" height="1" fill="#dcc49c" opacity="0.6"/>
  <rect x="315.2" y="157.9" width="6.5" height="1.1" fill="#8a7860" opacity="0.6"/>
  <rect x="214.9" y="140.3" width="7.8" height="2.1" fill="#6e6254" opacity="0.6"/>
  <rect x="317.2" y="143.3" width="5.2" height="1.3" fill="#6e6254" opacity="0.6"/>
  <rect x="240.6" y="116.1" width="6.1" height="1.1" fill="#8a7860" opacity="0.6"/>
  <rect x="273.1" y="145.3" width="4.4" height="1.9" fill="#8a7860" opacity="0.6"/>
  <rect x="60.9" y="98.4" width="3" height="2.1" fill="#4a5a54" opacity="0.65"/>
  <rect x="56.2" y="80.5" width="3.7" height="2.5" fill="#5a6468" opacity="0.65"/>
  <rect x="11.3" y="71.6" width="4.5" height="2.5" fill="#4a5a54" opacity="0.65"/>
  <rect x="74.7" y="83.5" width="4.7" height="1.9" fill="#6c7478" opacity="0.65"/>
  <rect x="19.3" y="96.3" width="3.5" height="3" fill="#3f5a50" opacity="0.65"/>
  <rect x="19.2" y="75.1" width="5.1" height="1.8" fill="#d0c8bc" opacity="0.65"/>
  <rect x="1.5" y="73.7" width="4.5" height="1.6" fill="#3f5a50" opacity="0.65"/>
  <rect x="10.2" y="85.3" width="3.3" height="2.8" fill="#a8a4a4" opacity="0.65"/>
  <rect x="79" y="62.9" width="4.4" height="2.3" fill="#a8a4a4" opacity="0.65"/>
  <rect x="4.4" y="64.9" width="5.8" height="2.5" fill="#c4c0bc" opacity="0.65"/>
  <rect x="61.5" y="61.9" width="5.7" height="2.2" fill="#c4c0bc" opacity="0.65"/>
  <rect x="11.5" y="86.7" width="3.7" height="1.9" fill="#4a5a54" opacity="0.65"/>
  <rect x="76.3" y="90.4" width="5.3" height="2.1" fill="#d0c8bc" opacity="0.65"/>
  <rect x="68.2" y="87.8" width="5.3" height="2.2" fill="#3f5a50" opacity="0.65"/>
  <rect x="29.7" y="59.7" width="6" height="1.8" fill="#c4c0bc" opacity="0.65"/>
  <rect x="32.4" y="62.5" width="2.6" height="1.8" fill="#5a6468" opacity="0.65"/>
  <rect x="40.2" y="101.1" width="4.8" height="2" fill="#a8a4a4" opacity="0.65"/>
  <rect x="38.6" y="98.9" width="4.7" height="2.1" fill="#a8a4a4" opacity="0.65"/>
  <rect x="37.9" y="66.8" width="4.8" height="1.6" fill="#3f5a50" opacity="0.65"/>
  <rect x="31.6" y="98.5" width="3" height="1.9" fill="#4a5a54" opacity="0.65"/>
  <rect x="67.1" y="92.5" width="4.9" height="1.5" fill="#5a6468" opacity="0.65"/>
  <rect x="28.2" y="92.6" width="3.6" height="1.6" fill="#5a6468" opacity="0.65"/>
  <rect x="55.3" y="79.7" width="5.8" height="1.7" fill="#d0c8bc" opacity="0.65"/>
  <rect x="26.6" y="78.9" width="3.3" height="3" fill="#5a6468" opacity="0.65"/>
  <rect x="16.5" y="59.1" width="3.3" height="1.6" fill="#a8a4a4" opacity="0.65"/>
  <rect x="74.8" y="90.5" width="4.9" height="1.8" fill="#4a5a54" opacity="0.65"/>
  <rect x="23.2" y="91.7" width="5" height="1.7" fill="#c4c0bc" opacity="0.65"/>
  <rect x="14.4" y="67.6" width="2.7" height="2.4" fill="#d0c8bc" opacity="0.65"/>
  <rect x="80" y="58.3" width="2.7" height="2.7" fill="#a8a4a4" opacity="0.65"/>
  <rect x="13.9" y="59.5" width="5.4" height="2.8" fill="#6c7478" opacity="0.65"/>
  <rect x="28.7" y="62.3" width="2.7" height="2.8" fill="#a8a4a4" opacity="0.65"/>
  <rect x="7.5" y="79.7" width="4.9" height="2.5" fill="#a8a4a4" opacity="0.65"/>
  <rect x="32.6" y="60.8" width="3.4" height="2.1" fill="#4a5a54" opacity="0.65"/>
  <rect x="52.5" y="98.3" width="5.8" height="1.8" fill="#d0c8bc" opacity="0.65"/>
  <rect x="41.7" y="76.5" width="4.4" height="1.6" fill="#4a5a54" opacity="0.65"/>
  <rect x="64.8" y="62" width="5.9" height="1.7" fill="#5a6468" opacity="0.65"/>
  <rect x="70.3" y="67.9" width="2.6" height="2.3" fill="#a8a4a4" opacity="0.65"/>
  <rect x="34.7" y="93.3" width="4.3" height="1.7" fill="#5a6468" opacity="0.65"/>
  <rect x="74.9" y="72.2" width="4.1" height="2.7" fill="#c4c0bc" opacity="0.65"/>
  <rect x="45.5" y="64.4" width="4.2" height="2.7" fill="#4a5a54" opacity="0.65"/>
  <rect x="204.2" y="87.5" width="2.8" height="1.6" fill="#c0bcc0" opacity="0.65"/>
  <rect x="197.6" y="99.2" width="4.9" height="2.5" fill="#565a66" opacity="0.65"/>
  <rect x="163.3" y="96.8" width="2.6" height="1.8" fill="#565a66" opacity="0.65"/>
  <rect x="207.7" y="101.3" width="2.7" height="2.7" fill="#aaa6ae" opacity="0.65"/>
  <rect x="200.6" y="93.3" width="4.7" height="2.5" fill="#c0bcc0" opacity="0.65"/>
  <rect x="191" y="90.6" width="4.5" height="2.5" fill="#6a6a74" opacity="0.65"/>
  <rect x="199.3" y="96.8" width="3.2" height="2.7" fill="#aaa6ae" opacity="0.65"/>
  <rect x="190.3" y="87.7" width="3.3" height="1.7" fill="#aaa6ae" opacity="0.65"/>
  <rect x="196.5" y="86.9" width="2.7" height="2.6" fill="#7c7a84" opacity="0.65"/>
  <rect x="161.5" y="82.9" width="4.9" height="2.7" fill="#aaa6ae" opacity="0.65"/>
  <rect x="206.4" y="102.8" width="4" height="1.8" fill="#aaa6ae" opacity="0.65"/>
  <rect x="166.8" y="84.8" width="3.4" height="1.7" fill="#7c7a84" opacity="0.65"/>
  <rect x="204.7" y="97.4" width="2.7" height="2.3" fill="#c0bcc0" opacity="0.65"/>
  <rect x="194.1" y="83.5" width="4.4" height="2.2" fill="#aaa6ae" opacity="0.65"/>
  <rect x="166.4" y="87.6" width="4.8" height="2.2" fill="#aaa6ae" opacity="0.65"/>
  <rect x="169.3" y="81.2" width="4.2" height="1.7" fill="#aaa6ae" opacity="0.65"/>
  <rect x="212.4" y="94.3" width="2.8" height="2.7" fill="#aaa6ae" opacity="0.65"/>
  <rect x="197" y="85" width="2.5" height="2.9" fill="#c0bcc0" opacity="0.65"/>
  <rect x="186" y="101.2" width="3.5" height="1.8" fill="#565a66" opacity="0.65"/>
  <rect x="204.4" y="87.3" width="3.8" height="2.6" fill="#c0bcc0" opacity="0.65"/>
  <rect x="179.8" y="99.4" width="4.5" height="2.5" fill="#6a6a74" opacity="0.65"/>
  <rect x="193.4" y="89.6" width="2.9" height="2.7" fill="#aaa6ae" opacity="0.65"/>
  <rect x="180.6" y="82.3" width="3.5" height="2.6" fill="#565a66" opacity="0.65"/>
  <rect x="208.6" y="84.8" width="4.5" height="2" fill="#aaa6ae" opacity="0.65"/>
  <rect x="206.6" y="95" width="4.5" height="2.1" fill="#6a6a74" opacity="0.65"/>
  <rect x="165.6" y="94.5" width="4.1" height="2.7" fill="#6a6a74" opacity="0.65"/>
  <rect x="268.8" y="45" width="3.6" height="2.1" fill="#9aa6bc" opacity="0.65"/>
  <rect x="285.3" y="70.2" width="4.1" height="2.7" fill="#566a8c" opacity="0.65"/>
  <rect x="312.5" y="70.3" width="4.8" height="2.3" fill="#9aa6bc" opacity="0.65"/>
  <rect x="272.1" y="66.6" width="4.9" height="2.3" fill="#2f4a78" opacity="0.65"/>
  <rect x="266.6" y="45" width="5.2" height="2.4" fill="#c8c4c8" opacity="0.65"/>
  <rect x="275.7" y="80.8" width="2.6" height="2.9" fill="#b4bccc" opacity="0.65"/>
  <rect x="251.2" y="72.6" width="4.8" height="2.9" fill="#2f4a78" opacity="0.65"/>
  <rect x="295.5" y="75.9" width="5.1" height="2.4" fill="#b4bccc" opacity="0.65"/>
  <rect x="280.8" y="47.5" width="2.9" height="2" fill="#566a8c" opacity="0.65"/>
  <rect x="276.5" y="80.8" width="4.8" height="2.1" fill="#c8c4c8" opacity="0.65"/>
  <rect x="284" y="51.9" width="4.9" height="2" fill="#2f4a78" opacity="0.65"/>
  <rect x="253.8" y="70.2" width="4.4" height="2.6" fill="#2f4a78" opacity="0.65"/>
  <rect x="263.9" y="47.8" width="3.5" height="2.7" fill="#566a8c" opacity="0.65"/>
  <rect x="251.6" y="80.1" width="2.8" height="2.1" fill="#b4bccc" opacity="0.65"/>
  <rect x="262.2" y="46.4" width="4.5" height="2.7" fill="#566a8c" opacity="0.65"/>
  <rect x="298.4" y="59.8" width="4" height="2.3" fill="#b4bccc" opacity="0.65"/>
  <rect x="267.8" y="54.7" width="4.6" height="2.9" fill="#b4bccc" opacity="0.65"/>
  <rect x="276.4" y="49.7" width="3.5" height="2.3" fill="#566a8c" opacity="0.65"/>
  <rect x="259.2" y="51.2" width="4.6" height="2.5" fill="#c8c4c8" opacity="0.65"/>
  <rect x="269.8" y="46.9" width="5.8" height="1.7" fill="#566a8c" opacity="0.65"/>
  <rect x="314.9" y="56.1" width="5.5" height="2.5" fill="#b4bccc" opacity="0.65"/>
  <rect x="310.3" y="67.4" width="5.3" height="2.8" fill="#3c5684" opacity="0.65"/>
  <rect x="259.9" y="50" width="2.8" height="1.7" fill="#566a8c" opacity="0.65"/>
  <rect x="300.7" y="65.8" width="4" height="2" fill="#b4bccc" opacity="0.65"/>
  <rect x="297.3" y="79.1" width="5.8" height="2.4" fill="#3c5684" opacity="0.65"/>
  <rect x="272.3" y="74.9" width="3.2" height="2" fill="#b4bccc" opacity="0.65"/>
  <rect x="279" y="69.9" width="5.1" height="1.6" fill="#9aa6bc" opacity="0.65"/>
  <rect x="313.8" y="61.7" width="2.5" height="3" fill="#2f4a78" opacity="0.65"/>
  <rect x="255.6" y="44.1" width="3.8" height="2" fill="#c8c4c8" opacity="0.65"/>
  <rect x="251.2" y="72.9" width="5" height="1.9" fill="#3c5684" opacity="0.65"/>
  <rect x="84.4" y="132" width="7" height="1.9" fill="#34503c" opacity="0.7"/>
  <rect x="157.5" y="118.7" width="6.9" height="2.7" fill="#2f4a44" opacity="0.7"/>
  <rect x="96.1" y="132.3" width="3.9" height="2.6" fill="#405848" opacity="0.7"/>
  <rect x="65.6" y="98" width="6.5" height="2" fill="#4a6a4c" opacity="0.7"/>
  <rect x="114.2" y="107.6" width="5.4" height="3.6" fill="#34503c" opacity="0.7"/>
  <rect x="146.6" y="144.3" width="7" height="2.1" fill="#283c40" opacity="0.7"/>
  <rect x="150.5" y="90.6" width="5.5" height="1.8" fill="#3a5a48" opacity="0.7"/>
  <rect x="141.5" y="124.4" width="8.9" height="3.7" fill="#4a6a4c" opacity="0.7"/>
  <rect x="42" y="144" width="5.4" height="2.5" fill="#b8ac98" opacity="0.7"/>
  <rect x="84.7" y="111.2" width="3.2" height="3.3" fill="#2f4a44" opacity="0.7"/>
  <rect x="154.7" y="132.4" width="5.1" height="2.4" fill="#283c40" opacity="0.7"/>
  <rect x="112.3" y="90.7" width="4.4" height="2.4" fill="#4a6a4c" opacity="0.7"/>
  <rect x="98.3" y="140.1" width="4.1" height="2.5" fill="#283c40" opacity="0.7"/>
  <rect x="22.6" y="84" width="7.1" height="1.6" fill="#2f4a44" opacity="0.7"/>
  <rect x="126.1" y="89.8" width="6.3" height="1.9" fill="#c8baa4" opacity="0.7"/>
  <rect x="23.2" y="103" width="5.1" height="3.1" fill="#34503c" opacity="0.7"/>
  <rect x="90" y="110" width="5" height="2.6" fill="#b8ac98" opacity="0.7"/>
  <rect x="51.6" y="157.1" width="5.8" height="2.9" fill="#405848" opacity="0.7"/>
  <rect x="44.5" y="138.9" width="8.5" height="1.5" fill="#c8baa4" opacity="0.7"/>
  <rect x="146.2" y="142.9" width="4.1" height="3.5" fill="#4a6a4c" opacity="0.7"/>
  <rect x="23.6" y="129" width="8.9" height="4" fill="#4a6a4c" opacity="0.7"/>
  <rect x="39.7" y="152.5" width="8.3" height="3.2" fill="#c8baa4" opacity="0.7"/>
  <rect x="107.5" y="99.4" width="6.2" height="2.7" fill="#3a5a48" opacity="0.7"/>
  <rect x="54.8" y="153.9" width="8.4" height="1.9" fill="#c8baa4" opacity="0.7"/>
  <rect x="104.4" y="85.5" width="5" height="3.7" fill="#b8ac98" opacity="0.7"/>
  <rect x="116.7" y="98.3" width="4.7" height="2.1" fill="#34503c" opacity="0.7"/>
  <rect x="115.2" y="92" width="8.3" height="2.6" fill="#2f4a44" opacity="0.7"/>
  <rect x="46" y="117.9" width="3.4" height="2.9" fill="#c8baa4" opacity="0.7"/>
  <rect x="124.5" y="113.7" width="6.5" height="3.8" fill="#2f4a44" opacity="0.7"/>
  <rect x="99.2" y="108.4" width="5.2" height="3.3" fill="#405848" opacity="0.7"/>
  <rect x="20.4" y="136" width="8.4" height="3.5" fill="#2c4438" opacity="0.7"/>
  <rect x="145.5" y="122.7" width="7.7" height="2.4" fill="#2c4438" opacity="0.7"/>
  <rect x="117.4" y="96.4" width="4.6" height="3.5" fill="#4a6a4c" opacity="0.7"/>
  <rect x="86.8" y="128.4" width="4.3" height="3" fill="#283c40" opacity="0.7"/>
  <rect x="99.3" y="87.5" width="5.1" height="1.7" fill="#3a5a48" opacity="0.7"/>
  <rect x="37.9" y="88.9" width="4.9" height="3.2" fill="#283c40" opacity="0.7"/>
  <rect x="69.2" y="84.3" width="5.9" height="2.6" fill="#405848" opacity="0.7"/>
  <rect x="25.9" y="127.2" width="5.7" height="3.7" fill="#2c4438" opacity="0.7"/>
  <rect x="150.1" y="82.6" width="5.2" height="2.2" fill="#2f4a44" opacity="0.7"/>
  <rect x="114.4" y="104.5" width="6.1" height="1.9" fill="#3a5a48" opacity="0.7"/>
  <rect x="40.7" y="117.3" width="6.6" height="3.6" fill="#2f4a44" opacity="0.7"/>
  <rect x="82.4" y="141.7" width="3.3" height="3.4" fill="#283c40" opacity="0.7"/>
  <rect x="93.3" y="139.9" width="5.4" height="3.2" fill="#34503c" opacity="0.7"/>
  <rect x="154.1" y="124.1" width="7.1" height="2.4" fill="#34503c" opacity="0.7"/>
  <rect x="63.1" y="120" width="5.2" height="2.3" fill="#405848" opacity="0.7"/>
  <rect x="84.8" y="142.9" width="3.8" height="2.7" fill="#283c40" opacity="0.7"/>
  <rect x="130.5" y="103.7" width="8.6" height="3" fill="#283c40" opacity="0.7"/>
  <rect x="131.8" y="142" width="6.6" height="1.9" fill="#c8baa4" opacity="0.7"/>
  <rect x="107.7" y="146" width="6.7" height="3.5" fill="#283c40" opacity="0.7"/>
  <rect x="77.3" y="132" width="5" height="3.4" fill="#b8ac98" opacity="0.7"/>
  <rect x="71.9" y="112.4" width="7.8" height="1.9" fill="#2f4a44" opacity="0.7"/>
  <rect x="135" y="90.3" width="4.6" height="3.7" fill="#3a5a48" opacity="0.7"/>
  <rect x="155.2" y="151.5" width="7.6" height="3.6" fill="#c8baa4" opacity="0.7"/>
  <rect x="134.6" y="98.1" width="8.3" height="1.6" fill="#c8baa4" opacity="0.7"/>
  <rect x="24" y="143.6" width="4.2" height="2" fill="#c8baa4" opacity="0.7"/>
  <rect x="147.8" y="156.6" width="7.6" height="2.9" fill="#34503c" opacity="0.7"/>
  <rect x="103" y="89.8" width="7.1" height="2.8" fill="#b8ac98" opacity="0.7"/>
  <rect x="31.7" y="82.5" width="3.8" height="2.5" fill="#b8ac98" opacity="0.7"/>
  <rect x="107" y="117.5" width="6.8" height="2.5" fill="#283c40" opacity="0.7"/>
  <rect x="143" y="84.1" width="8.1" height="1.6" fill="#405848" opacity="0.7"/>
  <rect x="86.8" y="147" width="7.1" height="3.9" fill="#283c40" opacity="0.7"/>
  <rect x="94.8" y="155.2" width="5.2" height="1.7" fill="#405848" opacity="0.7"/>
  <rect x="66.8" y="99.6" width="5.5" height="3.5" fill="#34503c" opacity="0.7"/>
  <rect x="148.6" y="84.4" width="7.1" height="2.9" fill="#34503c" opacity="0.7"/>
  <rect x="101" y="126.6" width="7.8" height="3.1" fill="#b8ac98" opacity="0.7"/>
  <rect x="124" y="114.2" width="6.3" height="2.3" fill="#2f4a44" opacity="0.7"/>
  <rect x="72.7" y="131.9" width="5" height="1.6" fill="#3a5a48" opacity="0.7"/>
  <rect x="37.9" y="91.3" width="5.9" height="1.8" fill="#c8baa4" opacity="0.7"/>
  <rect x="19.8" y="99.4" width="5.9" height="3.3" fill="#283c40" opacity="0.7"/>
  <rect x="124" y="107.8" width="5.3" height="3.7" fill="#b8ac98" opacity="0.7"/>
  <rect x="41.1" y="77.4" width="6.2" height="2.7" fill="#3a5448" opacity="0.6"/>
  <rect x="27.7" y="56.2" width="6.1" height="1.8" fill="#566c5c" opacity="0.6"/>
  <rect x="79.9" y="58.5" width="4.4" height="2.2" fill="#3a5448" opacity="0.6"/>
  <rect x="14.3" y="64.6" width="5.5" height="2.2" fill="#34504c" opacity="0.6"/>
  <rect x="71.5" y="64.2" width="4.9" height="2.1" fill="#4a6458" opacity="0.6"/>
  <rect x="108.8" y="78.5" width="7.7" height="2.7" fill="#3a5448" opacity="0.6"/>
  <rect x="20.8" y="56.8" width="4" height="2.1" fill="#4a6458" opacity="0.6"/>
  <rect x="73.9" y="76.1" width="3.7" height="2.2" fill="#2f4a50" opacity="0.6"/>
  <rect x="5.1" y="53.8" width="5.7" height="3.2" fill="#566c5c" opacity="0.6"/>
  <rect x="12.1" y="50.5" width="7" height="3.5" fill="#4a6458" opacity="0.6"/>
  <rect x="20.6" y="58.4" width="4.4" height="3.2" fill="#34504c" opacity="0.6"/>
  <rect x="22.5" y="51.5" width="3.6" height="1.9" fill="#34504c" opacity="0.6"/>
  <rect x="57.5" y="80.3" width="5.3" height="3.4" fill="#2f4a50" opacity="0.6"/>
  <rect x="53" y="56.3" width="4.4" height="3.3" fill="#34504c" opacity="0.6"/>
  <rect x="28.7" y="62.1" width="6.6" height="2.5" fill="#566c5c" opacity="0.6"/>
  <rect x="101.9" y="54.3" width="5" height="1.8" fill="#3a5448" opacity="0.6"/>
  <rect x="106.8" y="73.2" width="5" height="3.4" fill="#2f4a50" opacity="0.6"/>
  <rect x="18.2" y="75.1" width="5.1" height="2.1" fill="#4a6458" opacity="0.6"/>
  <rect x="50.7" y="74.9" width="3.7" height="2.4" fill="#566c5c" opacity="0.6"/>
  <rect x="36.9" y="46.7" width="3.6" height="3.2" fill="#2f4a50" opacity="0.6"/>
  <rect x="61.5" y="52.9" width="3.5" height="1.9" fill="#34504c" opacity="0.6"/>
  <rect x="45.6" y="62.2" width="4.3" height="3.4" fill="#4a6458" opacity="0.6"/>
  <rect x="94.2" y="45.3" width="4" height="3.2" fill="#3a5448" opacity="0.6"/>
  <rect x="95" y="51" width="5.7" height="3.3" fill="#3a5448" opacity="0.6"/>
  <rect x="58.7" y="61.8" width="7.8" height="2.6" fill="#3a5448" opacity="0.6"/>
  <rect x="52.3" y="40.9" width="5.5" height="2.2" fill="#2f4a50" opacity="0.6"/>
  <rect x="10.2" y="62.9" width="7.6" height="2.4" fill="#566c5c" opacity="0.6"/>
  <rect x="48" y="40.3" width="5.5" height="2.3" fill="#34504c" opacity="0.6"/>
  <rect x="2.9" y="73.4" width="5.6" height="2.7" fill="#4a6458" opacity="0.6"/>
  <rect x="26.4" y="57.1" width="7" height="3" fill="#566c5c" opacity="0.6"/>
  <rect x="9.7" y="68.5" width="3.2" height="2.1" fill="#4a6458" opacity="0.6"/>
  <rect x="83.1" y="54.6" width="6.3" height="3.2" fill="#3a5448" opacity="0.6"/>
  <rect x="117.1" y="45.9" width="6" height="1.8" fill="#566c5c" opacity="0.6"/>
  <rect x="63.9" y="47.4" width="7.1" height="3.2" fill="#34504c" opacity="0.6"/>
  <rect x="99.9" y="40.8" width="3.7" height="2.4" fill="#2f4a50" opacity="0.6"/>
  <rect x="84.1" y="71.6" width="7.1" height="3" fill="#4a6458" opacity="0.6"/>
  <rect x="159.9" y="43.2" width="4" height="2.4" fill="#66705c" opacity="0.5"/>
  <rect x="148.7" y="7.1" width="5.5" height="1.7" fill="#66705c" opacity="0.5"/>
  <rect x="101" y="18.3" width="7.4" height="2" fill="#5c6c5c" opacity="0.5"/>
  <rect x="139.8" y="49.1" width="4.6" height="2.4" fill="#5c6c5c" opacity="0.5"/>
  <rect x="232.7" y="14.9" width="5.7" height="2.2" fill="#4f6460" opacity="0.5"/>
  <rect x="227.7" y="6.7" width="7.8" height="2" fill="#586a70" opacity="0.5"/>
  <rect x="244" y="55.3" width="4.7" height="1.5" fill="#5c6c5c" opacity="0.5"/>
  <rect x="160.6" y="51.2" width="4.6" height="1.3" fill="#66705c" opacity="0.5"/>
  <rect x="194" y="27.9" width="4" height="1.5" fill="#5c6c5c" opacity="0.5"/>
  <rect x="218.9" y="38.1" width="5.5" height="2.3" fill="#4f6460" opacity="0.5"/>
  <rect x="172.2" y="38.4" width="5.3" height="2.2" fill="#66705c" opacity="0.5"/>
  <rect x="242.7" y="47.7" width="6.4" height="2" fill="#4f6460" opacity="0.5"/>
  <rect x="174.5" y="40.7" width="7.9" height="1.3" fill="#586a70" opacity="0.5"/>
  <rect x="127" y="15.8" width="3.4" height="1.8" fill="#586a70" opacity="0.5"/>
  <rect x="172.5" y="25.4" width="5" height="1.5" fill="#4f6460" opacity="0.5"/>
  <rect x="192.5" y="9.8" width="5.7" height="1.4" fill="#66705c" opacity="0.5"/>
  <rect x="188.9" y="37.8" width="3.2" height="1.8" fill="#586a70" opacity="0.5"/>
  <rect x="206.2" y="9.6" width="7.6" height="2.3" fill="#586a70" opacity="0.5"/>
  <rect x="186.3" y="39.4" width="5.8" height="1.4" fill="#586a70" opacity="0.5"/>
  <rect x="214" y="54.4" width="7.5" height="1.9" fill="#4f6460" opacity="0.5"/>
  <rect x="173.7" y="36.1" width="4.3" height="1.7" fill="#66705c" opacity="0.5"/>
  <rect x="232.4" y="31.4" width="5.9" height="1.2" fill="#5c6c5c" opacity="0.5"/>
  <rect x="162.6" y="30.1" width="7.8" height="2" fill="#4f6460" opacity="0.5"/>
  <rect x="195.8" y="38.3" width="3.1" height="1.4" fill="#4f6460" opacity="0.5"/>
  <polygon points="267,141 290,139 292,151 269,153" fill="#6a5c4c"/>
  <polygon points="294,131 306,131 306,138 294,138" fill="#4c4a52"/>
  <polygon points="296,140 320,140 320,160 298,160" fill="#8f7c64"/>
  <polygon points="300,144 310,144 310,150 300,150" fill="#4a4448"/>
  <polygon points="312,150 320,150 320,158 312,158" fill="#4e4a4c"/>
  <polygon points="288,152 320,154 320,158 290,157" fill="#5a5448" opacity="0.8"/>
  <polygon points="284,126 320,124 320,132 286,134" fill="#b09c80"/>
  </g>
  </g>
  <rect width="320" height="160" fill="url(#hz)"/>
  <g filter="url(#b0)">
  <polygon points="1,12.5 20,10.4 50,9.8 71,11.4 81,15.5 88.5,23.5 91,29.5 87,33.8 72,35.4 55,34.2 41,32.8 31,33.8 19,38.4 10.5,37 8.5,32.8 20,29 21.5,25.6 10,21.5 2.5,17" fill="#3b78ae" opacity="0.85" stroke="#a4bac8" stroke-width="1" stroke-opacity="0.85" stroke-linejoin="round"/>
  <polygon points="30,11 70,12 84,18 90,29 86,33 60,33.5 45,28" fill="#2a659c" opacity="0.35"/>
  <path d="M212 57 H218.640 A8 8 0 1 0 234.360 57 H240 V66.200 A7.100 7.100 0 1 1 240 77 V85 H232.950 A7.700 7.700 0 1 1 220.050 85 H212 Z" fill="#57524c" opacity="0.94"/>
  <path d="M222 70 L240 62 L250 66 L250 76 L236 84 L232 96 L222 96 Z" fill="#4a4744" opacity="0.5"/>
  <rect x="212" y="57" width="1.3" height="28" fill="#0c0c0c"/>
  <polygon points="0,0 1.8,0 0,1.8" fill="#8c1010"/>
  <polygon points="320,0 318.2,0 320,1.8" fill="#8c1010"/>
  </g>
  </g>
</svg>

<!-- slider -->
<div class="abs" style="left:736px;top:462px;width:320px;height:40px;border-radius:20px;background:#fff;box-shadow:inset 0 0 10px 3px #dff1ff"></div>
<div class="abs" style="left:784px;top:471px;font-size:14px;line-height:22px;color:#14a9fa;white-space:nowrap">拖动滑块完成拼图，获取手机验证码</div>
<div class="abs" style="left:736px;top:462.5px;width:38px;height:38.5px;border-radius:50%;background:#fff;border:1px solid #c4e8ff;box-shadow:0 2px 6px rgba(0,0,0,.22)"></div>
<svg class="abs" style="left:736px;top:462px" width="40" height="40" viewBox="0 0 40 40" fill="none" stroke="#19aafc" stroke-width="3.400" stroke-linecap="round" stroke-linejoin="round">
  <path d="M16.100 12l7.800 7.300-7.800 7.300"/>
</svg>

</body>
</html>
